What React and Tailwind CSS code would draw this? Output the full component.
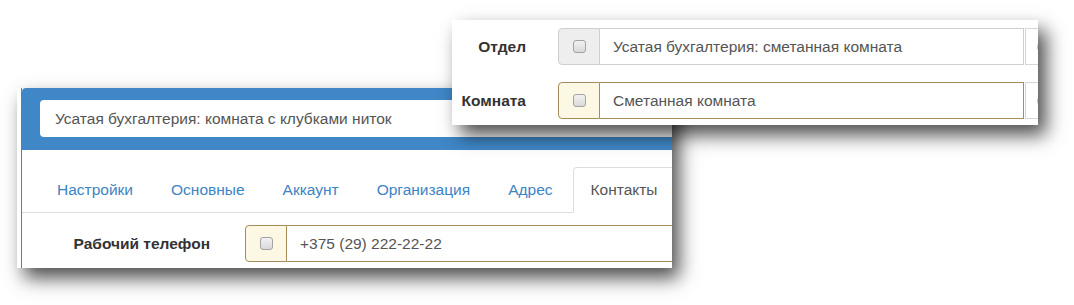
import React from "react";

const font = { fontFamily: "'Liberation Sans', Arial, sans-serif" };

function Check() {
  return (
    <span className="block w-[13px] h-[13px] rounded-[3px] border border-[#a3a3a3] bg-gradient-to-b from-[#f2f2f2] to-[#d9d9d9]" />
  );
}

function InputGroup({ value, warn, mainWidth, tail }) {
  const border = warn ? "border-[#a68b5b]" : "border-[#cfcfcf]";
  return (
    <div className="flex h-[37px] shrink-0">
      <div
        className={`w-[42px] shrink-0 flex items-center justify-center border rounded-l-[4px] ${border} ${
          warn ? "bg-[#fcf8e3]" : "bg-[#eeeeee]"
        }`}
      >
        <Check />
      </div>
      <div
        className={`${mainWidth} shrink-0 flex items-center pl-[13px] bg-white border-y border-r text-[#555] ${border}`}
      >
        {value}
      </div>
      {tail && (
        <div className="w-[40px] shrink-0 ml-px border border-[#d6d6d6] bg-white flex items-center pl-[11px]">
          <span className="block w-[12px] h-[12px] rounded-full border-2 border-[#c4c4c4]" />
        </div>
      )}
    </div>
  );
}

const tabs = ["Настройки", "Основные", "Аккаунт", "Организация", "Адрес"];

export default function App() {
  return (
    <div
      className="relative w-[1074px] h-[305px] bg-white overflow-hidden text-[15.5px]"
      style={font}
    >
      {/* back window: user card */}
      <div className="absolute left-[17px] top-[88px] w-[655px] h-[180px] bg-white overflow-hidden shadow-[7px_10px_18px_rgba(0,0,0,0.7)] pl-[4px]">
        <div className="h-full border-l border-[#3f87c7]">
          <div className="h-[62px] bg-[#3f87c7] rounded-tl-[4px] pl-[18px] pt-[12px]">
            <div className="h-[37px] w-[640px] bg-white rounded-[4px] flex items-center pl-[15px] text-[#555]">
              Усатая бухгалтерия: комната с клубками ниток
            </div>
          </div>

          <div className="mt-[17px] flex border-b border-[#dddddd] pl-[17px] h-[46px]">
            {tabs.map((t) => (
              <div
                key={t}
                className="h-[45px] px-[17px] mr-[2px] border border-transparent flex items-center text-[#3d84c4] shrink-0"
              >
                {t}
              </div>
            ))}
            <div className="h-[46px] px-[17px] border border-[#dddddd] border-b-white bg-white rounded-t-[4px] flex items-center text-[#555] w-[120px] shrink-0">
              Контакты
            </div>
          </div>

          <div className="mt-[12px] flex items-center">
            <div className="w-[188px] shrink-0 text-right font-bold text-[#333]">
              Рабочий телефон
            </div>
            <div className="ml-[35px] shrink-0">
              <InputGroup value="+375 (29) 222-22-22" warn mainWidth="w-[420px]" />
            </div>
          </div>
        </div>
      </div>

      {/* front window: department / room */}
      <div className="absolute left-[452px] top-[20px] w-[586px] h-[105px] bg-white overflow-hidden shadow-[8px_10px_18px_rgba(0,0,0,0.7)] pt-[8px]">
        <div className="flex items-center">
          <div className="w-[74px] shrink-0 text-right font-bold text-[#333]">Отдел</div>
          <div className="ml-[32px] shrink-0">
            <InputGroup
              value="Усатая бухгалтерия: сметанная комната"
              mainWidth="w-[424px]"
              tail
            />
          </div>
        </div>
        <div className="flex items-center mt-[17px]">
          <div className="w-[74px] shrink-0 text-right font-bold text-[#333]">Комната</div>
          <div className="ml-[32px] shrink-0">
            <InputGroup value="Сметанная комната" warn mainWidth="w-[424px]" tail />
          </div>
        </div>
      </div>
    </div>
  );
}
